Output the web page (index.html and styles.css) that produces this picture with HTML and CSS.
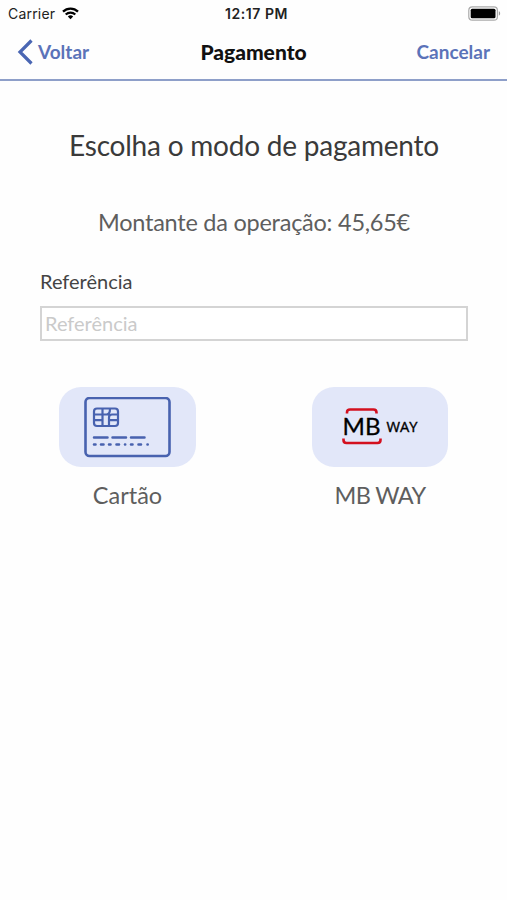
FILE: index.html
```html
<!DOCTYPE html>
<html lang="pt">
<head>
	<title>Pagamento</title>
	<meta charset="UTF-8">
	<meta name="viewport" content="width=device-width, initial-scale=1">

	<link rel="stylesheet" href="styles.css">
</head>
<body>

    <div class="status">
        <div class="carrier">
            <span>Carrier</span>
            <svg width="17" height="13" viewBox="0 0 17 13">
                <path d="M1 4.6a10.8 10.8 0 0 1 15 0" fill="none" stroke="#000" stroke-width="2.3"/>
                <path d="M3.7 7.5a7 7 0 0 1 9.6 0" fill="none" stroke="#000" stroke-width="2.2"/>
                <path d="M8.5 12.3L5.8 9.6a3.9 3.9 0 0 1 5.4 0z"/>
            </svg>
        </div>
        <span class="hora">12:17 PM</span>
        <svg class="bateria" width="33" height="15" viewBox="0 0 33 15">
            <rect x="0.8" y="0.8" width="28.6" height="13.4" rx="3.5" fill="#fff" stroke="#aaa" stroke-width="1.2"/>
            <rect x="2.7" y="2.7" width="24.8" height="9.6" rx="1.5"/>
            <path d="M30.8 5.3c1.8 0.6 1.8 3.8 0 4.4z" fill="#999"/>
        </svg>
    </div>

    <header class="barra">
        <a class="voltar">
            <svg width="17" height="26" viewBox="0 0 17 26">
                <path d="M14.5 1.5L3 13l11.5 11.5" fill="none" stroke="#4a66b3" stroke-width="3.2"/>
            </svg>
            <span>Voltar</span>
        </a>
        <h1>Pagamento</h1>
        <a class="cancelar">Cancelar</a>
    </header>

    <main>
        <h2>Escolha o modo de pagamento</h2>
        <p class="montante">Montante da operação: 45,65€</p>

        <form>
            <label for="referencia">Referência</label>
            <input id="referencia" type="text" placeholder="Referência" />
        </form>

        <div class="modos">
            <div class="modo">
                <button class="cartao" type="button">
                    <svg width="87" height="61" viewBox="0 0 87 61" fill="none" stroke="#4862af" stroke-width="2.2">
                        <rect x="1.5" y="1" width="84" height="58" rx="4" stroke-width="2.6"/>
                        <rect x="10" y="11.5" width="24" height="17.5" rx="3"/>
                        <path d="M18.5 11.5V29M10 17.5h8.5M10 23.2h8.5M25 29v-8.5q0-3 3-3h6M25 23.2h9M18.5 17.5h4q3.500 0 3.500-6"/>
                        <path d="M10 40.5h13.5M28.5 40.5h13.5M47 40.5h13.5" stroke-width="2.5" stroke-linecap="round"/>
                        <path d="M10 47.5h1.5M17 47.5h2.5M25 47.5h1.5M32.5 47.5h2.5M41 47.5h0.2M47 47.5h1.5M54.5 47.5h2.5M63.5 47.5h0.2" stroke-width="2.6" stroke-linecap="round"/>
                    </svg>
                </button>
                <span>Cartão</span>
            </div>
            <div class="modo">
                <button class="mbway" type="button">
                    <svg width="78" height="38" viewBox="0 0 78 38">
                        <path d="M6 5.5v-1q0-3 3-3h23.5q3 0 3 3v1M2.5 30.500v1.500q0 3 3 3h31q3 0 3-3v-1.500" fill="none" stroke="#d3101f" stroke-width="2.6"/>
                        <text class="mb" x="1.5" y="26.5" textLength="38" lengthAdjust="spacingAndGlyphs">MB</text>
                        <text class="way" x="45.5" y="23.5" textLength="31" lengthAdjust="spacingAndGlyphs">WAY</text>
                    </svg>
                </button>
                <span>MB WAY</span>
            </div>
        </div>
    </main>

</body>
</html>
```

FILE: styles.css
```css
*{
	box-sizing: border-box;
	font-family: Lato, sans-serif;
}
body{
	margin: 0;
	background-color: #fefefe;
}
h1, h2, p{
	margin: 0;
}
.status{
	display: grid;
	grid-template-columns: 1fr auto 1fr;
	align-items: center;
	height: 27px;
	padding: 0 6px 0 8px;
}
.status span{
	font-family: Inter, sans-serif;
	font-size: 14px;
	color: #222;
}
.carrier{
	display: flex;
	align-items: center;
	gap: 7px;
}
.carrier span{
	letter-spacing: 0.2px;
}
.status .hora{
	padding-left: 4px;
	font-size: 14px;
	font-weight: 600;
	letter-spacing: 0.55px;
}
.bateria{
	justify-self: end;
}
.barra{
	display: grid;
	grid-template-columns: 1fr auto 1fr;
	align-items: center;
	height: 54px;
	padding: 0 17px 3px 17px;
	border-bottom: 2px solid #8e9fc9;
}
.barra h1{
	font-size: 21px;
	font-weight: 900;
	color: #111;
}
.voltar, .cancelar{
	font-size: 19px;
	font-weight: bold;
	color: #5b73b9;
}
.voltar{
	display: flex;
	align-items: center;
	gap: 4px;
}
.cancelar{
	justify-self: end;
}
main{
	padding: 0 39px 0 40px;
}
h2{
	margin-top: 47px;
	line-height: 34px;
	font-size: 28px;
	font-weight: normal;
	letter-spacing: -0.22px;
	text-align: center;
	color: #3a3a3a;
}
.montante{
	margin-top: 45px;
	line-height: 30px;
	font-size: 23.5px;
	letter-spacing: -0.25px;
	text-align: center;
	color: #5e5e5e;
}
form{
	display: flex;
	flex-direction: column;
	margin-top: 32px;
}
label{
	line-height: 24px;
	font-size: 20px;
	color: #444;
}
input{
	height: 35px;
	margin-top: 13px;
	padding: 0 3px 2px 3px;
	border: 2px solid #d4d4d4;
	background-color: white;
	font-size: 20px;
}
input::placeholder{
	color: #cacaca;
}
.modos{
	display: flex;
	justify-content: space-between;
	margin-top: 46px;
	padding: 0 20px 0 19px;
}
.modo{
	display: flex;
	flex-direction: column;
	align-items: center;
}
.modo button{
	display: flex;
	justify-content: center;
	align-items: center;
	width: 137px;
	height: 80px;
	padding: 0;
	border: none;
	border-radius: 22px;
	background-color: #e2e7f9;
}
.modo .mbway{
	width: 136px;
}
.modo span{
	margin-top: 13px;
	line-height: 30px;
	font-size: 23.5px;
	color: #5e5e5e;
}
.mbway + span{
	letter-spacing: -0.7px;
}
.mb{
	font-family: Lato, sans-serif;
	font-size: 24px;
	stroke: #000;
	stroke-width: 0.3px;
}
.way{
	font-family: "Open Sans", sans-serif;
	font-size: 15px;
	stroke: #000;
	stroke-width: 0.4px;
}
```
